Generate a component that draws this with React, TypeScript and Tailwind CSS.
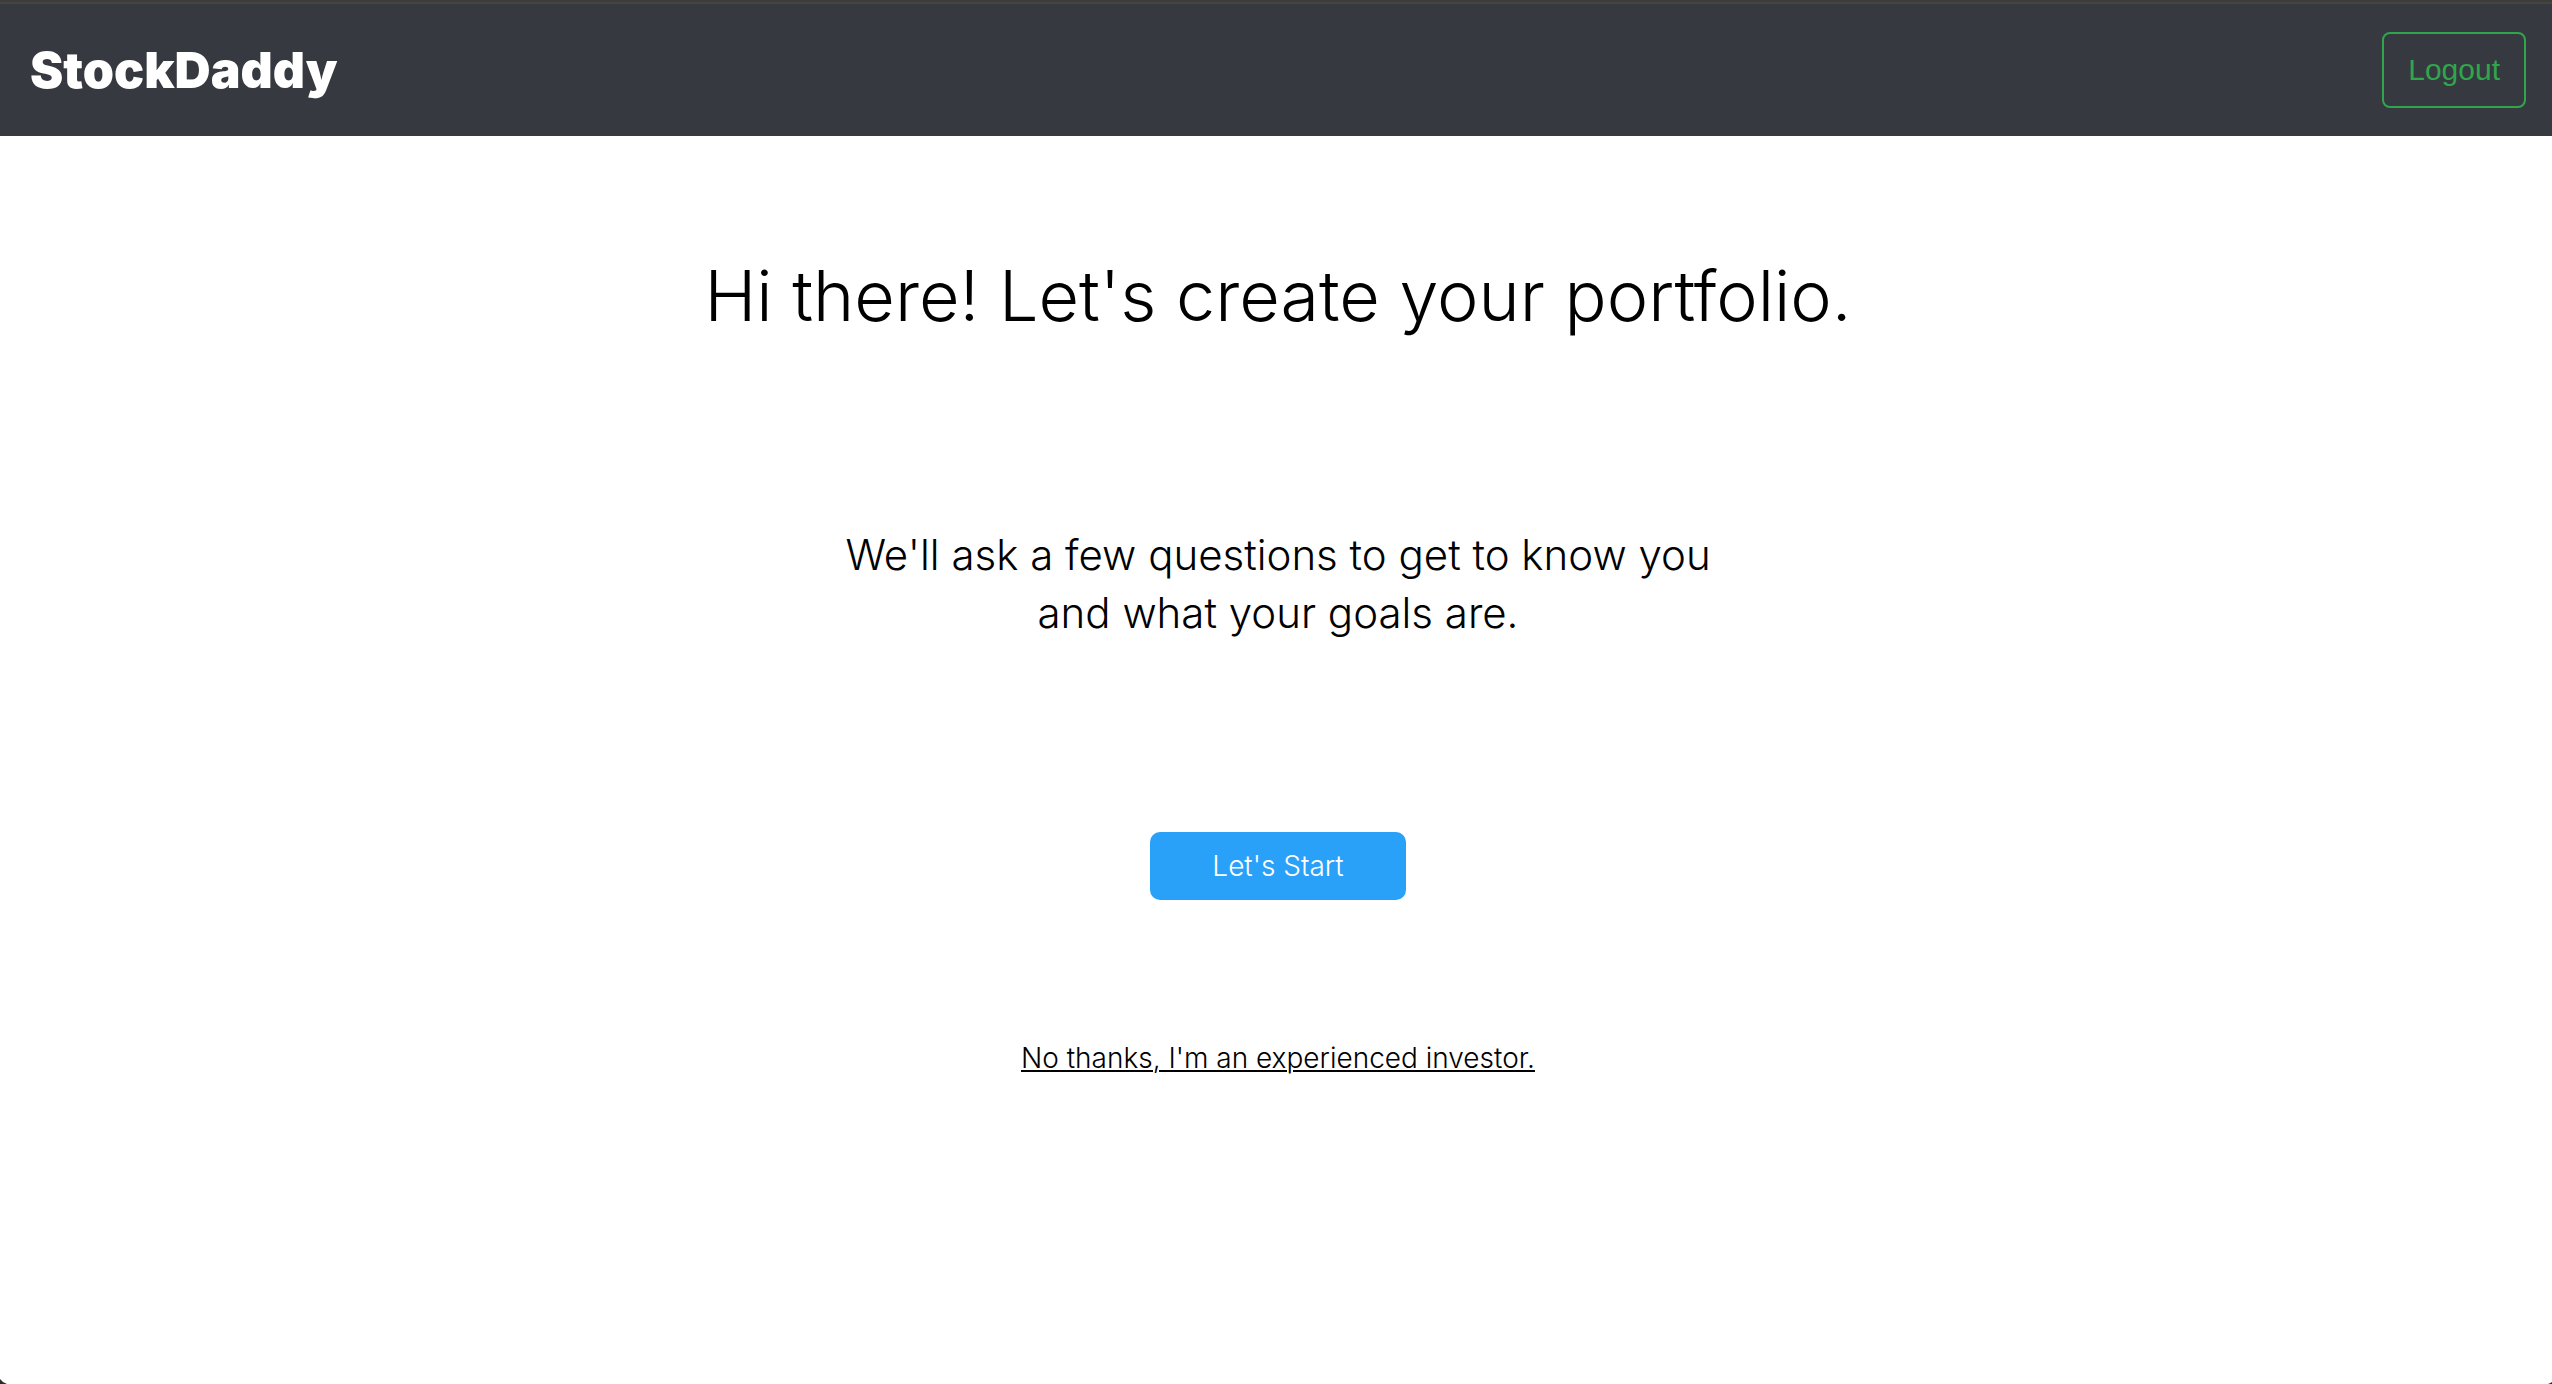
function Navbar() {
  return (
    <nav className="flex items-center justify-between border-t-2 border-[#454540] bg-[#363940] py-7 pr-[26px] pl-[30px]">
      <a href="#home" className="font-['Inter',sans-serif] text-[50px] leading-[60px] font-black text-white">
        StockDaddy
      </a>
      <button
        type="button"
        className="rounded-lg border-2 border-[#30a64c] px-6 py-4 font-['Liberation_Sans',sans-serif] text-[30px] leading-10 text-[#30a64c]"
      >
        Logout
      </button>
    </nav>
  );
}

export default function App() {
  return (
    <div className="relative flex min-h-screen flex-col overflow-hidden bg-white font-['Inter',sans-serif] font-light text-black">
      <div className="h-0.5 bg-[#3c3c3b]" />
      <Navbar />
      <main className="flex flex-col items-center pl-1 text-center">
        <h1 className="mt-[120px] text-[70px] leading-20">Hi there! Let's create your portfolio.</h1>
        <p className="mt-[190px] text-[42px] leading-[58px]">
          We'll ask a few questions to get to know you
          <br />
          and what your goals are.
        </p>
        <button
          type="button"
          className="mt-[190px] w-64 rounded-[10px] bg-[#2aa1f9] py-4 text-[28px] leading-9 text-white"
        >
          Let's Start
        </button>
        <a href="#portfolio" className="mt-[140px] text-[28px] leading-9 underline decoration-2 underline-offset-2">
          No thanks, I'm an experienced investor.
        </a>
      </main>
      <svg className="absolute bottom-0 left-0 h-2 w-2" viewBox="0 0 8 8" aria-hidden="true">
        <path d="M0 3Q2 6 7 8H0Z" fill="#2b2b2b" />
      </svg>
      <svg className="absolute right-0 bottom-0 h-1 w-1" viewBox="0 0 4 4" aria-hidden="true">
        <path d="M4 2Q3 3 0 4H4Z" fill="#2b2b2b" />
      </svg>
    </div>
  );
}
